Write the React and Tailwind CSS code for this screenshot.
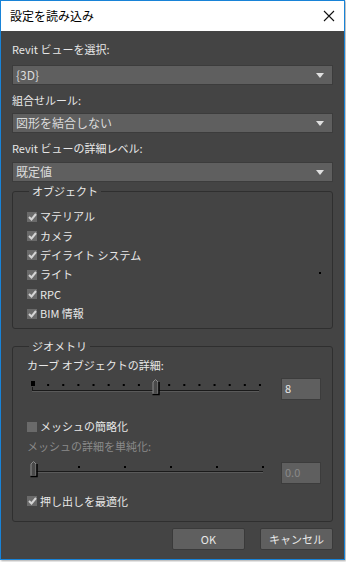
import React from 'react';

const font = { fontFamily: '"Noto Sans CJK JP", "Noto Sans", sans-serif' };

function Arrow() {
  return (
    <svg width="8" height="5" viewBox="0 0 8 5">
      <path d="M0 0 H8 L4 5 Z" fill="#e0e0e0" />
    </svg>
  );
}

function Dropdown({ value }) {
  return (
    <div className="h-[20px] bg-[#5f5f5f] border border-[#3c3c3c] flex items-center justify-between pl-[3px] pr-[8px] text-[12px] text-[#dcdcdc] leading-none">
      <span>{value}</span>
      <Arrow />
    </div>
  );
}

function Checkbox({ checked, label }) {
  return (
    <div className="flex items-center h-[19.4px] gap-[3px] text-[11px] text-[#e8e8e8] leading-none">
      <div className="w-[10px] h-[10px] bg-[#6a6a6a] flex items-center justify-center">
        {checked && (
          <svg width="9" height="8" viewBox="0 0 9 8">
            <path d="M1 4 L3.5 6.5 L8 1" stroke="#d4d4d4" strokeWidth="2" fill="none" />
          </svg>
        )}
      </div>
      <span>{label}</span>
    </div>
  );
}

function Thumb({ x }) {
  return (
    <g transform={`translate(${x} 0)`}>
      <path d="M1 15 V3 L3.5 0.5 L6 3 V15 Z" fill="#4a4a4a" stroke="#8a8a8a" strokeWidth="1" />
      <path d="M0.5 15.5 H7 V3" stroke="#000" strokeWidth="1.5" fill="none" />
    </g>
  );
}

function Slider1() {
  const ticks = Array.from({ length: 16 }, (_, i) => 1 + i * 15.13);
  return (
    <svg width="236" height="18" viewBox="0 0 236 18">
      <rect x="1" y="11" width="227" height="1" fill="#1a1a1a" />
      <rect x="1" y="12" width="227" height="1" fill="#5a5a5a" />
      <rect x="1" y="8" width="1" height="4" fill="#1a1a1a" />
      <rect x="0" y="2" width="4" height="5" fill="#000" />
      {ticks.slice(1).map((t, i) => (
        <rect key={i} x={t} y="5" width="2" height="2" fill="#000" />
      ))}
      <Thumb x={121} />
    </svg>
  );
}

function Slider2() {
  const ticks = [48, 94, 140, 186, 232];
  return (
    <svg width="236" height="18" viewBox="0 0 236 18">
      <rect x="4" y="10" width="229" height="1" fill="#1a1a1a" />
      <rect x="4" y="11" width="229" height="1" fill="#5a5a5a" />
      {ticks.map((t, i) => (
        <rect key={i} x={t} y="5" width="2" height="2" fill="#000" />
      ))}
      <Thumb x={0} />
    </svg>
  );
}

function NumBox({ value, disabled }) {
  return (
    <div className={`w-[40px] h-[22px] bg-[#5f5f5f] border border-[#3c3c3c] pl-[3px] pt-[2px] text-[11px] leading-[14px] ${disabled ? 'text-[#8a8a8a]' : 'text-[#e8e8e8]'}`}>
      {value}
    </div>
  );
}

export default function App() {
  return (
    <div className="w-[346px] h-[562px] bg-white" style={font}>
      <div className="w-[345px] h-[560px] border border-[#1883d7] flex flex-col shadow-[1px_1px_2px_rgba(0,0,0,0.35)]">
        {/* Title bar */}
        <div className="h-[30px] bg-white flex items-center justify-between pl-[9px] pr-[9px] shrink-0">
          <span className="text-[12px] text-black">設定を読み込み</span>
          <svg width="12" height="12" viewBox="0 0 12 12">
            <path d="M1 1 L11 11 M11 1 L1 11" stroke="#111" strokeWidth="1.1" />
          </svg>
        </div>

        {/* Body */}
        <div className="flex-1 bg-[#444444] px-[11px] flex flex-col text-[#e8e8e8] text-[11px]">
          <div className="h-[34px] flex items-center pt-[2px]">Revit ビューを選択:</div>
          <Dropdown value="{3D}" />
          <div className="h-[28px] flex items-center pt-[2px]">組合せルール:</div>
          <Dropdown value="図形を結合しない" />
          <div className="h-[29px] flex items-center pt-[1px]">Revit ビューの詳細レベル:</div>
          <Dropdown value="既定値" />

          {/* Object group */}
          <fieldset className="mt-[2px] h-[145px] border border-[#2f2f2f] rounded-[3px] pl-[14px] relative">
            <legend className="ml-[2px] px-[3px] text-[11px] leading-[14px]">オブジェクト</legend>
            <div className="pt-[9px] flex flex-col">
              <Checkbox checked label="マテリアル" />
              <Checkbox checked label="カメラ" />
              <Checkbox checked label="デイライト システム" />
              <Checkbox checked label="ライト" />
              <Checkbox checked label="RPC" />
              <Checkbox checked label="BIM 情報" />
            </div>
            <div className="absolute right-[11px] top-[74px] w-[2px] h-[2px] bg-black" />
          </fieldset>

          {/* Geometry group */}
          <fieldset className="mt-[10px] h-[183px] border border-[#2f2f2f] rounded-[3px] pl-[14px] pr-[11px]">
            <legend className="ml-[2px] px-[3px] text-[11px] leading-[14px]">ジオメトリ</legend>
            <div className="h-[24px] flex items-center">カーブ オブジェクトの詳細:</div>
            <div className="flex items-start justify-between h-[27px] mt-[1px]">
              <div className="pt-[1px] pl-[4px]"><Slider1 /></div>
              <NumBox value="8" />
            </div>
            <div className="mt-[12px]"><Checkbox label="メッシュの簡略化" /></div>
            <div className="h-[20px] flex items-center text-[#8a8a8a]">メッシュの詳細を単純化:</div>
            <div className="flex items-start justify-between h-[27px] mt-[5px]">
              <div className="pl-[3px]"><Slider2 /></div>
              <div className="mt-[1px]"><NumBox value="0.0" disabled /></div>
            </div>
            <div className="mt-[3px]"><Checkbox checked label="押し出しを最適化" /></div>
          </fieldset>

          {/* Buttons */}
          <div className="flex justify-end gap-[15px] mt-[6px] pr-[0px]">
            <button className="w-[73px] h-[22px] bg-[#5f5f5f] border border-[#3a3a3a] rounded-[2px] text-[11px] text-[#e8e8e8]">OK</button>
            <button className="w-[73px] h-[22px] bg-[#5f5f5f] border border-[#3a3a3a] rounded-[2px] text-[11px] text-[#e8e8e8]">キャンセル</button>
          </div>
        </div>
      </div>
    </div>
  );
}
